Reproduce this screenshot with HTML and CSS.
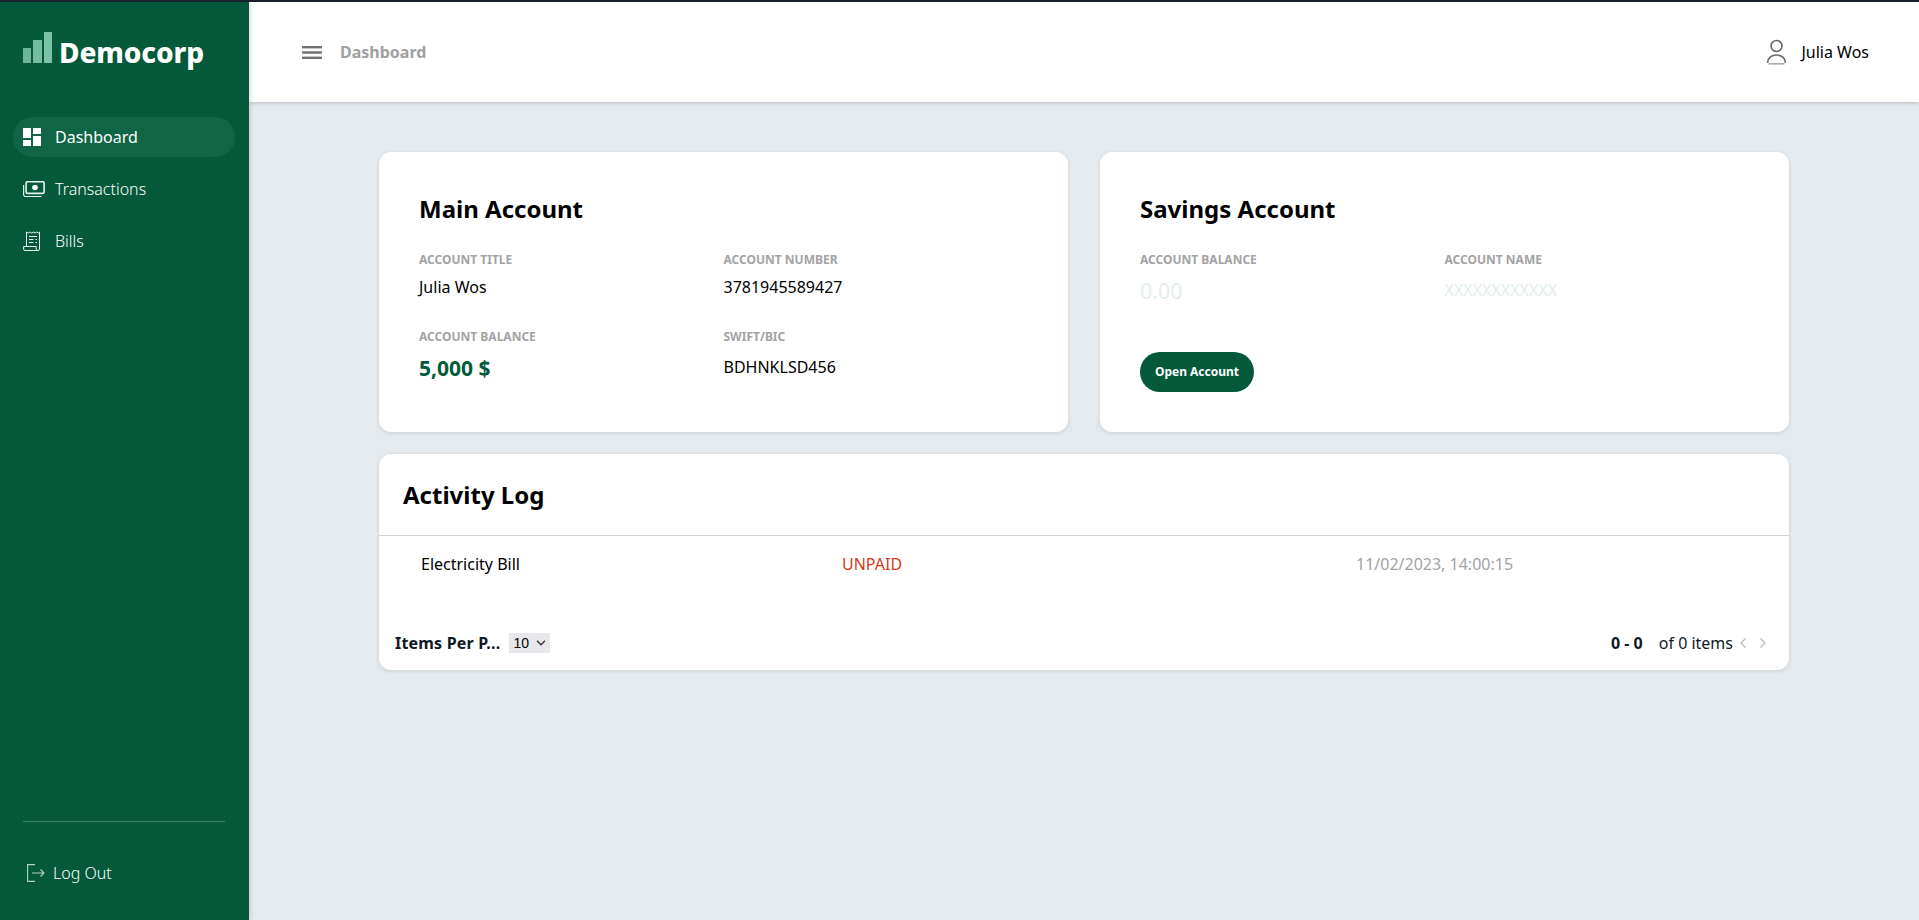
FILE: index.html
```html
<!DOCTYPE html>
<html lang="en">
<head>
<meta charset="utf-8">
<title>Democorp</title>
<link rel="stylesheet" href="styles.css">
</head>
<body>
<div class="app">
  <aside class="sidebar">
    <div class="brand">
      <svg class="brand-icon" width="30" height="31" viewBox="0 0 30 31"><rect x="0" y="16" width="8" height="15" fill="#6db69a"/><rect x="10" y="8" width="9" height="23" fill="#74bb9f"/><rect x="21" y="0" width="8" height="31" fill="#7cc2a6"/></svg>
      <span class="brand-name">Democorp</span>
    </div>
    <nav class="nav">
      <a class="nav-item active">
        <span class="nav-slot"><svg width="18" height="18" viewBox="0 0 18 18" fill="#fff"><rect x="0" y="0" width="8" height="10"/><rect x="10" y="0" width="8" height="6"/><rect x="0" y="12" width="8" height="6"/><rect x="10" y="8" width="8" height="10"/></svg></span>
        <span>Dashboard</span>
      </a>
      <a class="nav-item">
        <span class="nav-slot"><svg width="22" height="16" viewBox="0 0 22 16" fill="none" stroke="#e8f2ee" stroke-width="1.2"><rect x="3.100" y="0.600" width="18" height="11.800" rx="1.500" stroke-width="1.600"/><circle cx="12" cy="6.500" r="2.800" fill="#fff" stroke="none"/><path d="M0.600 4v9.500a2 2 0 0 0 2 2h16"/></svg></span>
        <span>Transactions</span>
      </a>
      <a class="nav-item">
        <span class="nav-slot"><svg width="18" height="20" viewBox="0 0 18 20" fill="none" stroke="#e8f2ee" stroke-width="1"><path d="M3.500 15.500V1l1.700 1 1.700-1 1.700 1 1.700-1 1.700 1 1.700-1 1.700 1 1.100-1v17a1.500 1.500 0 0 1-1.500 1.500H2A1.500 1.500 0 0 1 .6 18v-2.500h12.600V18a1.500 1.500 0 0 0 1.500 1.500"/><path d="M6 5.500h8M6 8.500h4.500M12.500 8.500H14M6 11.500h4.500M12.500 11.500H14"/></svg></span>
        <span>Bills</span>
      </a>
    </nav>
    <div class="sidebar-foot">
      <a class="logout">
        <svg width="18" height="18" viewBox="0 0 18 18" fill="none" stroke="#b5d3c7" stroke-width="1.100"><path d="M8 .6H.6v16.800H8"/><path d="M5 9h12M13.500 5.500 17 9l-3.500 3.500"/></svg>
        <span>Log Out</span>
      </a>
    </div>
  </aside>
  <div class="content">
    <header class="topbar">
      <div class="topbar-left">
        <svg width="20" height="13" viewBox="0 0 20 13" fill="#707070"><rect y="0" width="20" height="2.400"/><rect y="5.300" width="20" height="2.400"/><rect y="10.600" width="20" height="2.400"/></svg>
        <span class="crumb">Dashboard</span>
      </div>
      <div class="user">
        <svg width="21" height="26" viewBox="0 0 21 26" fill="none" stroke="#6a6a6a" stroke-width="1.600"><circle cx="10.500" cy="7" r="5.500"/><path d="M1.500 24c0-5 4-8 9-8s9 3 9 8"/><path d="M2.500 24.800h16" stroke="#aaa"/></svg>
        <span>Julia Wos</span>
      </div>
    </header>
    <main class="main">
      <div class="accounts">
        <section class="card account">
          <h2 class="card-title">Main Account</h2>
          <div class="fields">
            <div class="field"><div class="label">ACCOUNT TITLE</div><div class="value">Julia Wos</div></div>
            <div class="field"><div class="label">ACCOUNT NUMBER</div><div class="value">3781945589427</div></div>
            <div class="field"><div class="label">ACCOUNT BALANCE</div><div class="value balance">5,000 $</div></div>
            <div class="field"><div class="label">SWIFT/BIC</div><div class="value swift">BDHNKLSD456</div></div>
          </div>
        </section>
        <section class="card account">
          <h2 class="card-title">Savings Account</h2>
          <div class="fields">
            <div class="field"><div class="label">ACCOUNT BALANCE</div><div class="value muted-big">0.00</div></div>
            <div class="field"><div class="label">ACCOUNT NAME</div><div class="value muted">XXXXXXXXXXXX</div></div>
          </div>
          <button class="open-btn">Open Account</button>
        </section>
      </div>
      <section class="card log">
        <h2 class="log-title">Activity Log</h2>
        <div class="log-row">
          <span class="log-name">Electricity Bill</span>
          <span class="log-status">UNPAID</span>
          <span class="log-date">11/02/2023, 14:00:15</span>
        </div>
        <div class="pager">
          <div class="pager-left">
            <span class="per-page">Items Per P...</span>
            <span class="select">10
              <svg width="10" height="6" viewBox="0 0 10 6" fill="none" stroke="#333" stroke-width="1.300"><path d="M1 .8 5 4.800 9 .8"/></svg>
            </span>
          </div>
          <div class="pager-right">
            <b class="range">0 - 0</b>
            <span class="total">of 0 items</span>
            <svg class="chev prev" width="8" height="12" viewBox="0 0 8 12" fill="none" stroke="#bbb" stroke-width="1.300"><path d="M6.500 1.500 2 6l4.500 4.500"/></svg>
            <svg class="chev next" width="8" height="12" viewBox="0 0 8 12" fill="none" stroke="#bbb" stroke-width="1.300"><path d="M1.500 1.500 6 6l-4.500 4.500"/></svg>
          </div>
        </div>
      </section>
    </main>
  </div>
</div>
</body>
</html>
```
FILE: styles.css
```css
* { box-sizing: border-box; }
html, body { margin: 0; height: 100%; overflow: hidden; }
body { font-family: "Noto Sans", sans-serif; color: #000; background: #e5eaee; border-top: 2px solid #1a202c; }
.app { display: flex; height: 100%; }
.sidebar { width: 249px; flex: none; background: #03593a; color: #fff; display: flex; flex-direction: column; padding: 0 14px 0 13px; box-shadow: 2px 0 4px rgba(0,0,0,.12); z-index: 2; }
.brand { display: flex; align-items: center; height: 100px; padding-left: 10px; gap: 6px; }
.brand-icon { flex: none; margin-top: -9px; }
.brand-name { font-size: 28px; font-weight: 800; line-height: 1; letter-spacing: -0.1px; }
.nav { display: flex; flex-direction: column; gap: 12px; margin-top: 15px; }
.nav-item { display: flex; align-items: center; height: 40px; padding-left: 10px; border-radius: 20px; font-size: 16px; font-weight: 300; color: #fff; }
.nav-item.active { background: #0f6545; font-weight: 400; }
.nav-slot { flex: none; width: 32px; display: flex; align-items: center; }
.sidebar-foot { margin: auto 10px 0; border-top: 1px solid #3d7f67; height: 99px; padding: 40px 0 0 4px; }
.logout { display: flex; align-items: center; gap: 8px; font-size: 16px; font-weight: 300; color: #fff; }
.content { flex: 1; display: flex; flex-direction: column; min-width: 0; }
.topbar { height: 100px; flex: none; background: #fff; display: flex; align-items: center; justify-content: space-between; padding: 0 50px 0 53px; box-shadow: 0 1px 4px rgba(0,0,0,.2); z-index: 1; }
.topbar-left { display: flex; align-items: center; gap: 18px; }
.crumb { font-size: 16px; font-weight: 700; color: #a0a0a0; }
.user { display: flex; align-items: center; gap: 14px; font-size: 16px; }
.main { flex: 1; padding: 50px 130px 0; }
.accounts { display: grid; grid-template-columns: 1fr 1fr; gap: 32px; }
.card { background: #fff; border-radius: 12px; box-shadow: 0 1px 4px rgba(0,0,0,.12); }
.account { height: 280px; padding: 40px 40px 0; }
.card-title { margin: 0; font-size: 24px; font-weight: 700; line-height: 34px; }
.fields { display: grid; grid-template-columns: 1fr 1fr; margin-top: 26px; row-gap: 31px; }
.label { font-size: 12px; font-weight: 700; color: #a3a3a3; line-height: 16px; }
.value { font-size: 16px; line-height: 22px; margin-top: 8px; }
.balance { font-size: 21px; font-weight: 700; color: #055a3b; line-height: 28px; margin-top: 9px; }
.swift { margin-top: 11px; }
.muted-big { font-size: 21.500px; color: #e3eeea; line-height: 28px; margin-top: 9px; }
.muted { color: #e3eeea; margin-top: 11px; }
.open-btn { display: block; margin-top: 47px; width: 114px; height: 40px; border: 0; border-radius: 20px; background: #03593a; color: #fff; font: 700 12px "Noto Sans", sans-serif; padding: 0 0 2px; }
.log { margin-top: 22px; height: 216px; display: flex; flex-direction: column; }
.log-title { margin: 0; font-size: 24px; font-weight: 700; line-height: 34px; padding: 24px 24px 23px; border-bottom: 1px solid #d3d3d6; height: 82px; }
.log-row { display: grid; grid-template-columns: 421px 514px 1fr; padding-left: 42px; height: 56px; align-items: center; font-size: 16px; }
.log-status { color: #d63a1a; }
.log-date { color: #a3a3a3; }
.pager { display: flex; justify-content: space-between; align-items: center; padding: 0 22px 0 16px; margin-top: 40px; }
.pager-left { display: flex; align-items: center; gap: 9px; }
.per-page { font-size: 16px; font-weight: 700; color: #111827; letter-spacing: .2px; }
.select { display: flex; align-items: center; justify-content: space-between; width: 41px; height: 20px; background: #e8e8ec; font: 14px "Liberation Sans", sans-serif; padding: 0 4px; }
.pager-right { display: flex; align-items: center; font-size: 16px; color: #111827; }
.range { font-weight: 700; margin-right: 16px; }
.prev { margin-left: 6px; }
.next { margin-left: 12px; }
```
